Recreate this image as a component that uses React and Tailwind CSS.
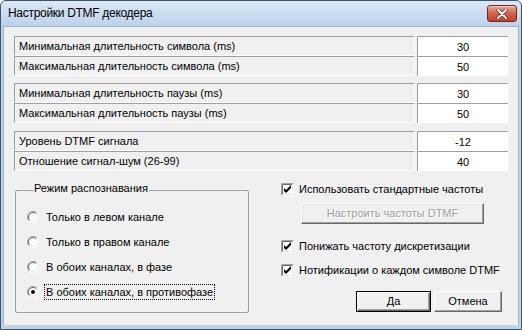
import React from 'react';

const rowGroups = [
  [
    ['Минимальная длительность символа (ms)', '30'],
    ['Максимальная длительность символа (ms)', '50']
  ],
  [
    ['Минимальная длительность паузы (ms)', '30'],
    ['Максимальная длительность паузы (ms)', '50']
  ],
  [
    ['Уровень DTMF сигнала', '-12'],
    ['Отношение сигнал-шум (26-99)', '40']
  ]
];

const modes = [
  'Только в левом канале',
  'Только в правом канале',
  'В обоих каналах, в фазе',
  'В обоих каналах, в противофазе'
];

function Radio({ checked }) {
  return (
    <svg width="12" height="12" viewBox="0 0 12 12" className="shrink-0">
      <circle cx="6" cy="6" r="5.5" fill="#fff" />
      <path d="M9.9 2.1 A5.5 5.5 0 0 0 2.1 9.9" stroke="#a0a0a0" fill="none" />
      <path d="M9.2 2.8 A4.5 4.5 0 0 0 2.8 9.2" stroke="#696969" fill="none" />
      <path d="M2.1 9.9 A5.5 5.5 0 0 0 9.9 2.1" stroke="#ffffff" fill="none" />
      <path d="M2.8 9.2 A4.5 4.5 0 0 0 9.2 2.8" stroke="#e3e3e3" fill="none" />
      {checked && <circle cx="6" cy="6" r="2" fill="#000" />}
    </svg>
  );
}

function Check() {
  return (
    <svg width="13" height="13" viewBox="0 0 13 13" className="shrink-0">
      <rect x="0" y="0" width="13" height="13" fill="#fff" />
      <path d="M0.5 12.5 V0.5 H12.5" stroke="#a0a0a0" fill="none" />
      <path d="M1.5 11.5 V1.5 H11.5" stroke="#696969" fill="none" />
      <path d="M1 11.5 H11.5 V1" stroke="#e3e3e3" fill="none" />
      <path d="M3 5 V8 L5 10 L10 5 V2 L5 7 Z" fill="#000" />
    </svg>
  );
}

function CheckRow({ label, className }) {
  return (
    <div className={`flex items-center h-[14px] gap-[5px] ${className}`}>
      <Check />
      <span>{label}</span>
    </div>
  );
}

export default function App() {
  return (
    <div className="w-[522px] h-[330px] flex flex-col bg-[#bfd3ea] border border-[#3e526b] rounded-t-[6px] font-['Liberation_Sans',Arial,sans-serif] text-[11px] text-black overflow-hidden">
      {/* title bar */}
      <div className="h-[25px] shrink-0 flex items-start pl-[7px] pr-[4px] pt-[4px] bg-gradient-to-b from-[#dbe7f5] to-[#bcd2eb] rounded-t-[5px]">
        <span className="text-[12px] leading-[18px] mt-[-1px] tracking-[-0.3px]">Настройки DTMF декодера</span>
        <div className="ml-auto w-[30px] h-[17px] rounded-[3px] border border-[#6b2a1e] bg-gradient-to-b from-[#e9a694] via-[#d3624b] to-[#c2432b] shadow-[inset_0_1px_0_#f4c8bc] flex items-center justify-center">
          <svg width="12" height="10" viewBox="0 0 12 10">
            <path d="M2 1 L10 9 M10 1 L2 9" stroke="#5a2015" strokeWidth="3.2" strokeLinecap="round" />
            <path d="M2 1 L10 9 M10 1 L2 9" stroke="#fff" strokeWidth="2" strokeLinecap="round" />
          </svg>
        </div>
      </div>

      {/* client area */}
      <div className="flex-1 mx-[2px] mb-[4px] bg-[#f0f0f0] border-l border-r border-t border-[#9fb3cc] px-[10px] pt-[9px] flex flex-col">
        {rowGroups.map((group, gi) => (
          <div key={gi} className={gi === 1 ? 'mt-[7px]' : gi === 2 ? 'mt-[8px]' : ''}>
            {group.map(([label, value]) => (
              <div key={label} className="flex h-[20px] gap-[2px]">
                <div className="flex-1 flex items-center pl-[4px] pt-[1px] border-t border-l border-[#a0a0a0] border-b border-r border-b-white border-r-white">
                  {label}
                </div>
                <div className="w-[91px] flex items-center justify-center pt-[1px] bg-white border-t border-l border-[#a0a0a0]">
                  {value}
                </div>
              </div>
            ))}
          </div>
        ))}

        <div className="flex mt-[11px]">
          <fieldset className="ml-[1px] mt-[2px] w-[234px] h-[129px] border border-[#a0a0a0] rounded-[2px] pl-[11px]">
            <legend className="ml-[6px] px-[1px] leading-[13px] relative top-[-2px]">Режим распознавания</legend>
            <div className="flex flex-col mt-[7px]">
              {modes.map((m, i) => (
                <div key={m} className="flex items-center h-[25px] gap-[7px]">
                  <Radio checked={i === 3} />
                  <span
                    className={
                      i === 3
                        ? 'border border-dotted border-black px-[1px] leading-[14px] ml-[-2px]'
                        : 'leading-[14px]'
                    }
                  >
                    {m}
                  </span>
                </div>
              ))}
            </div>
          </fieldset>

          <div className="ml-[32px] flex flex-col">
            <CheckRow label="Использовать стандартные частоты" />
            <button
              disabled
              className="ml-[20px] mt-[7px] w-[183px] h-[21px] bg-[#f0f0f0] border border-t-white border-l-white border-b-[#696969] border-r-[#696969] shadow-[inset_-1px_-1px_0_#a0a0a0,inset_1px_1px_0_#e3e3e3] text-[#a0a0a0] [text-shadow:1px_1px_0_#fff]"
            >
              Настроить частоты DTMF
            </button>
            <CheckRow label="Понижать частоту дискретизации" className="mt-[15px]" />
            <CheckRow label="Нотификации о каждом символе DTMF" className="mt-[10px]" />
            <div className="flex mt-[14px] ml-[75px] gap-[3px]">
              <button className="w-[75px] h-[21px] bg-[#f0f0f0] border border-black shadow-[inset_1px_1px_0_#fff,inset_-1px_-1px_0_#696969,inset_-2px_-2px_0_#a0a0a0]">
                Да
              </button>
              <button className="w-[68px] h-[21px] bg-[#f0f0f0] border border-t-white border-l-white border-b-[#696969] border-r-[#696969] shadow-[inset_-1px_-1px_0_#a0a0a0]">
                Отмена
              </button>
            </div>
          </div>
        </div>
      </div>
    </div>
  );
}
